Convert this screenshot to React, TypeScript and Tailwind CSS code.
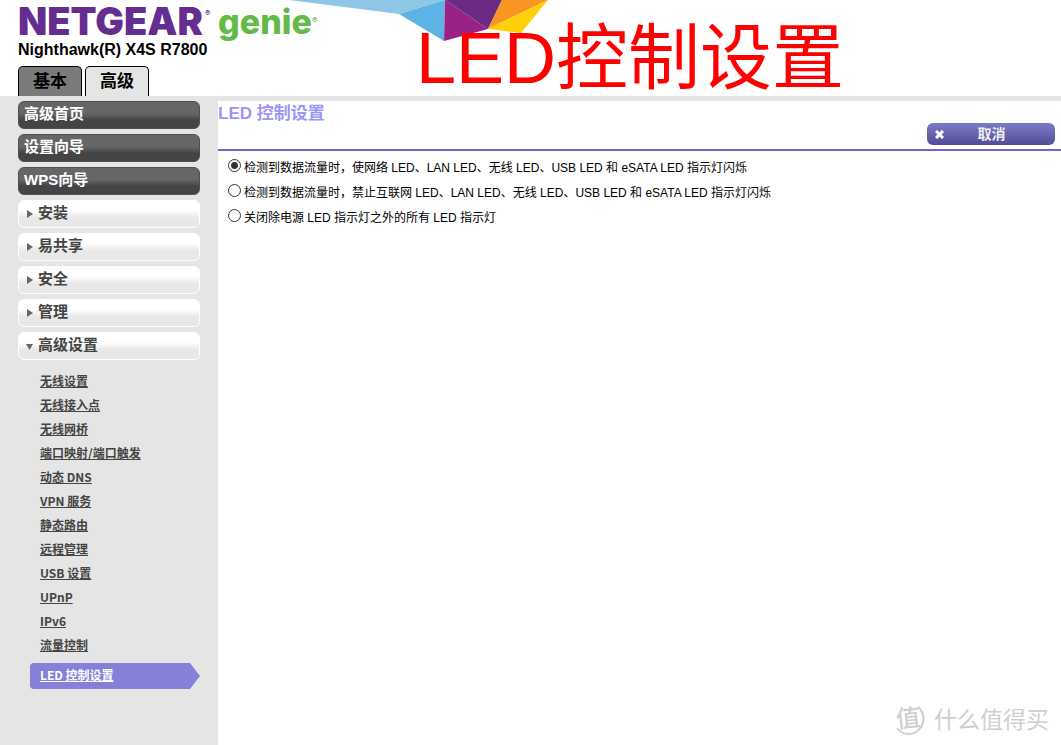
import React, { useState } from 'react';
import clsx from 'clsx';

const mainLinks = ['高级首页', '设置向导', 'WPS向导'];

const sections = ['安装', '易共享', '安全', '管理', '高级设置'];

const subLinks = [
  '无线设置',
  '无线接入点',
  '无线网桥',
  '端口映射/端口触发',
  '动态 DNS',
  'VPN 服务',
  '静态路由',
  '远程管理',
  'USB 设置',
  'UPnP',
  'IPv6',
  '流量控制',
];

const ledOptions = [
  '检测到数据流量时，使网络 LED、LAN LED、无线 LED、USB LED 和 eSATA LED 指示灯闪烁',
  '检测到数据流量时，禁止互联网 LED、LAN LED、无线 LED、USB LED 和 eSATA LED 指示灯闪烁',
  '关闭除电源 LED 指示灯之外的所有 LED 指示灯',
];

function Logo() {
  return (
    <svg width="304" height="48" viewBox="0 0 304 48" role="img" aria-label="NETGEAR genie">
      <g fontFamily="Inter, sans-serif" fontWeight="800">
        <text x="0" y="35" fontSize="38" fontWeight="900" fill="#662d91">NETGEAR</text>
        <text x="187" y="16" fontSize="8" fill="#662d91">®</text>
        <text x="200" y="34" fontSize="34" fill="#62bb46">genie</text>
        <text x="294" y="23" fontSize="8" fill="#62bb46">®</text>
      </g>
    </svg>
  );
}

function Facets() {
  return (
    <svg width="260" height="42" viewBox="0 0 260 42" aria-hidden="true">
      <polygon points="0,0 156,0 110,14" fill="#8ec6e6" />
      <polygon points="110,14 156,0 155,41" fill="#5cb3e4" />
      <polygon points="156,0 199,29 155,41" fill="#9a2287" />
      <polygon points="156,0 213,0 199,29" fill="#6b2a84" />
      <polygon points="213,0 259,0 199,29" fill="#f99621" />
      <polygon points="259,0 232,33 199,29" fill="#fdd00a" />
    </svg>
  );
}

function Header() {
  return (
    <header className="relative flex h-24 flex-col bg-white pl-[18px]">
      <div className="absolute left-[289px] top-0">
        <Facets />
      </div>
      <div className="relative h-[41px]">
        <Logo />
      </div>
      <p className="text-base font-bold leading-[18px] text-black">Nighthawk(R) X4S R7800</p>
      <nav className="mt-auto flex gap-[3px]">
        <button className="h-[30px] w-16 rounded-t-[5px] border border-b-0 border-black bg-[#7b7b7b] text-[17px] font-bold text-black">
          基本
        </button>
        <button className="h-[30px] w-16 rounded-t-[5px] border border-b-0 border-black bg-[#e5e5e5] text-[17px] font-bold text-black">
          高级
        </button>
      </nav>
      <div className="pointer-events-none absolute left-[416px] top-4 whitespace-nowrap text-[72px] leading-[84px] text-[#ff0000]">
        LED控制设置
      </div>
    </header>
  );
}

function Sidebar() {
  const [open, setOpen] = useState('高级设置');

  return (
    <aside className="w-[218px] shrink-0 bg-[#e5e5e5] pl-[18px] pr-[18px]">
      <div className="flex flex-col gap-[5px]">
        {mainLinks.map(label => (
          <button
            key={label}
            className="h-7 rounded-md border border-[#505050] bg-gradient-to-b from-[#666666] from-45% to-[#444444] to-70% pb-0.5 pl-[5px] text-left text-[15px] font-bold leading-[22px] text-white"
          >
            {label}
          </button>
        ))}
        {sections.map(label => (
          <button
            key={label}
            onClick={() => setOpen(label)}
            className="flex h-7 items-center gap-1 rounded-md border border-white bg-gradient-to-b from-white from-35% to-[#e8e8e8] to-65% pl-[7px] text-left text-[15px] font-bold leading-[22px] text-[#444444]"
          >
            <svg width="8" height="8" viewBox="0 0 8 8" fill="#666666" aria-hidden="true">
              {open === label ? <path d="M0 2h7L3.5 8z" /> : <path d="M1 0l6 4-6 4z" />}
            </svg>
            <span className="pb-0.5">{label}</span>
          </button>
        ))}
      </div>

      <ul className="mt-[9px] pl-[22px] font-['Noto_Sans_CJK_SC',sans-serif] text-xs font-bold leading-6 text-[#444444]">
        {subLinks.map(label => (
          <li key={label} className="h-6">
            <a href="#" className="underline">{label}</a>
          </li>
        ))}
      </ul>
      {/* current page marker with the arrow edge */}
      <div className="ml-3 mt-1.5 h-[26px] rounded-sm bg-[#8680d8] pl-2.5 font-['Noto_Sans_CJK_SC',sans-serif] text-xs font-bold leading-6 text-white [clip-path:polygon(0_0,160px_0,100%_50%,160px_100%,0_100%)]">
        <a href="#" className="underline">LED 控制设置</a>
      </div>
    </aside>
  );
}

function LedSettings() {
  const [selected, setSelected] = useState(0);

  return (
    <main className="min-w-0 flex-1 bg-white">
      <div className="flex h-[50px] justify-between border-b-2 border-[#6c66d8] pr-1.5">
        <h1 className="text-[17px] font-bold leading-[26px] text-[#9b95fb]">LED 控制设置</h1>
        <button className="mb-1 flex h-[22px] w-32 items-center self-end rounded-md bg-gradient-to-b from-[#7f79cb] to-[#524d94] pl-2 text-sm font-bold leading-5 text-[#eeeeee]">
          <svg width="9" height="9" viewBox="0 0 9 9" stroke="#ffffff" strokeWidth="3" aria-hidden="true">
            <path d="M1 1l7 7M8 1l-7 7" />
          </svg>
          <span className="flex-1 pr-4 text-center">取消</span>
        </button>
      </div>
      <form className="flex flex-col pl-2.5 pt-1">
        {ledOptions.map((text, i) => (
          <label key={text} className="flex h-[25px] items-center gap-[3px] whitespace-nowrap text-xs text-black">
            <input
              type="radio"
              name="led"
              checked={selected === i}
              onChange={() => setSelected(i)}
              className={clsx(
                'mb-1 h-[13px] w-[13px] shrink-0 appearance-none rounded-full border border-[#333333]',
                selected === i ? 'bg-[radial-gradient(circle,#333333_0_3px,#ffffff_4px)]' : 'bg-white'
              )}
            />
            <span>{text}</span>
          </label>
        ))}
      </form>
    </main>
  );
}

function Watermark() {
  return (
    <div className="pointer-events-none absolute bottom-2 right-3 flex items-center gap-2 text-[#cfcfcf]">
      <svg width="32" height="34" viewBox="0 0 32 34" aria-hidden="true">
        <path d="M24 4C30 9 31 18 27 24C22 32 10 34 3 25" fill="none" stroke="currentColor" strokeWidth="2" />
        <text x="2" y="24" fontSize="24" fontWeight="500" fill="currentColor" transform="rotate(-6 13 16)">值</text>
      </svg>
      <span className="text-[23px] leading-8">什么值得买</span>
    </div>
  );
}

export default function App() {
  return (
    <div className="relative flex min-h-screen flex-col bg-white font-['Liberation_Sans','Noto_Sans_CJK_SC',sans-serif]">
      <Header />
      <div className="h-[5px] bg-[#e5e5e5]" />
      <div className="flex flex-1">
        <Sidebar />
        <LedSettings />
      </div>
      <Watermark />
    </div>
  );
}
